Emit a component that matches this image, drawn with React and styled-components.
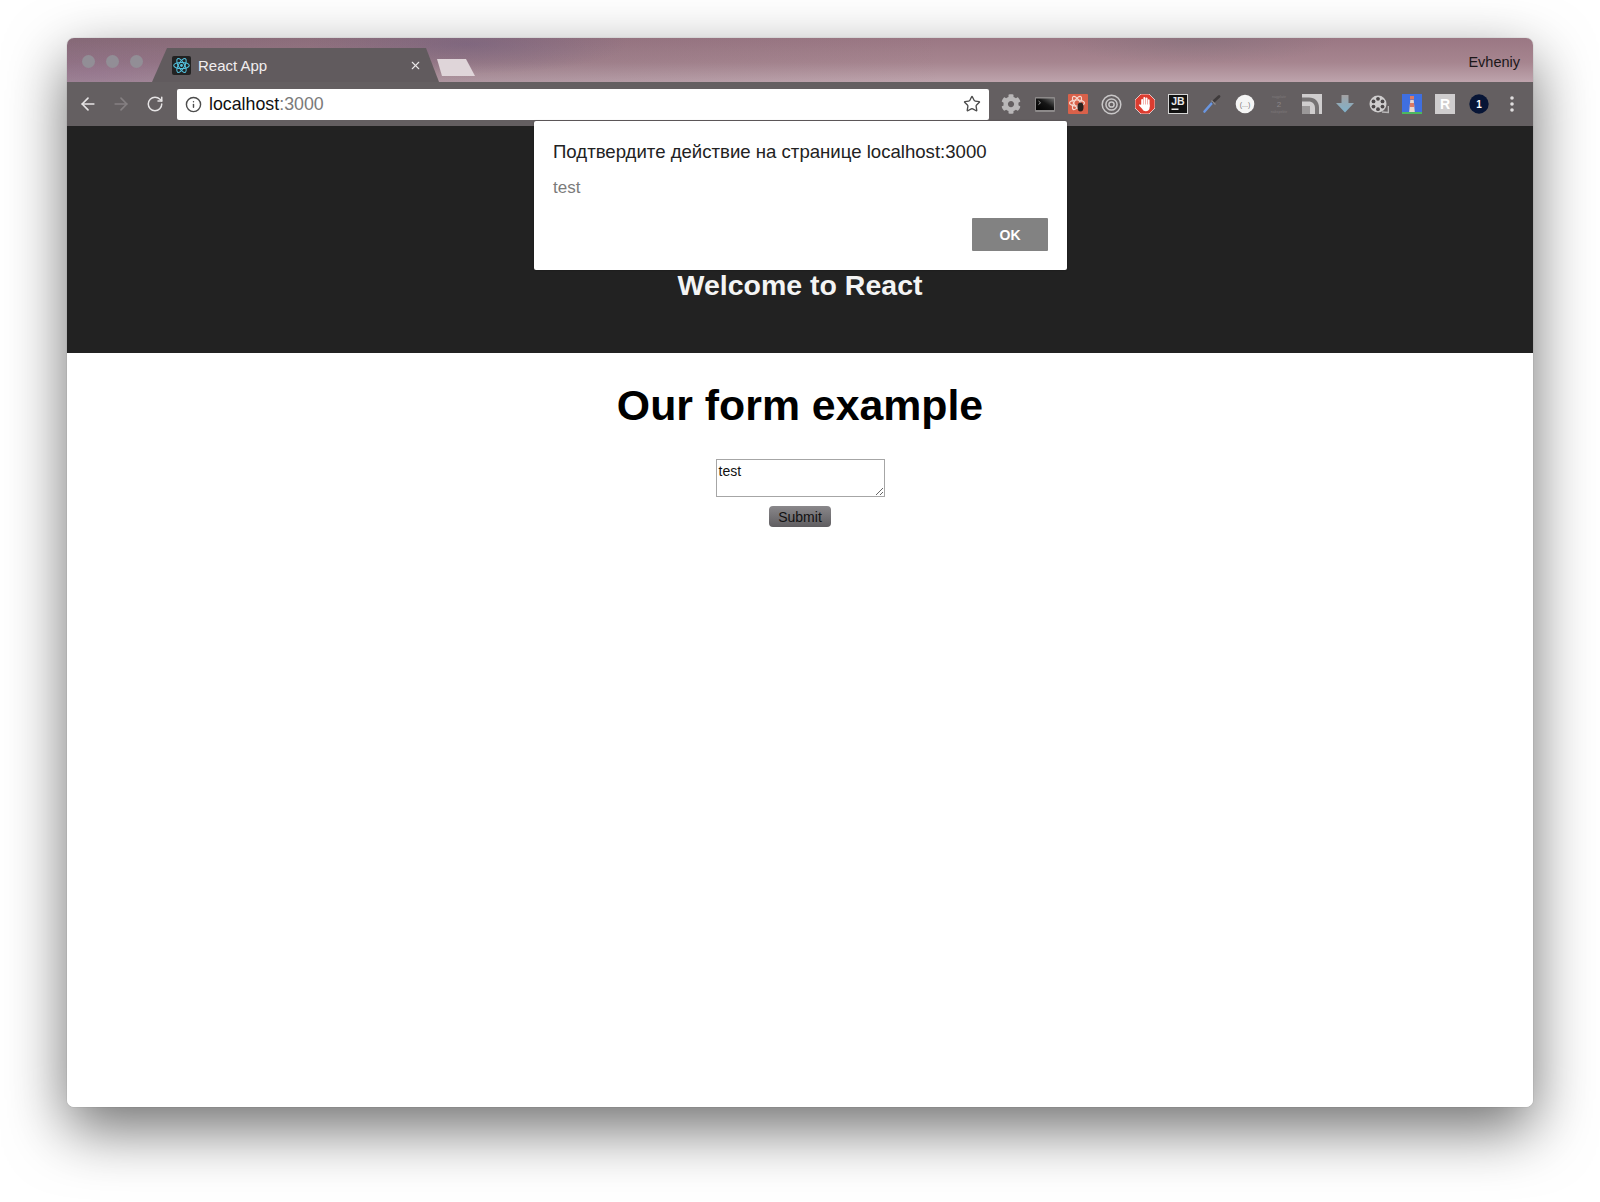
import React from "react";
import styled, { createGlobalStyle } from "styled-components";
import { ArrowLeft, ArrowRight, Info, RotateCw, Star, X } from "lucide-react";
import { FaCog } from "react-icons/fa";

const GlobalStyle = createGlobalStyle`
  html, body {
    margin: 0;
    padding: 0;
    background: #ffffff;
    font-family: "Liberation Sans", Arial, sans-serif;
  }
`;

const Desktop = styled.div`
  width: 1600px;
  height: 1202px;
  padding: 38px 67px 95px;
  box-sizing: border-box;
  overflow: hidden;
`;

const Window = styled.div`
  position: relative;
  display: flex;
  flex-direction: column;
  height: 100%;
  border-radius: 7px;
  background: #ffffff;
  box-shadow: 0 22px 60px rgba(0, 0, 0, 0.57), 0 0 1px rgba(0, 0, 0, 0.45);
`;

const TabStrip = styled.div`
  display: flex;
  align-items: flex-end;
  height: 44px;
  flex: none;
  border-radius: 7px 7px 0 0;
  background:
    radial-gradient(ellipse 160px 30px at 400px 6px, rgba(105, 90, 125, 0.45), rgba(105, 90, 125, 0) 100%),
    radial-gradient(ellipse 150px 34px at 30px 36px, rgba(150, 110, 150, 0.35), rgba(150, 110, 150, 0) 100%),
    radial-gradient(ellipse 140px 24px at 1130px 2px, rgba(110, 105, 115, 0.3), rgba(110, 105, 115, 0) 100%),
    linear-gradient(90deg, rgba(85, 70, 90, 0.3) 0%, rgba(85, 70, 90, 0.1) 35%, rgba(0, 0, 0, 0) 60%),
    linear-gradient(180deg, #9a7783 0%, #a6858f 55%, #bea4ad 100%);
`;

const Lights = styled.div`
  display: flex;
  align-self: flex-start;
  gap: 11px;
  margin: 17px 0 0 15px;
`;

const Light = styled.span`
  width: 13px;
  height: 13px;
  border-radius: 50%;
  background: #928e96;
`;

const Tab = styled.div`
  display: flex;
  align-items: center;
  width: 287px;
  height: 34px;
  margin-left: 9px;
  padding: 0 17px 0 20px;
  box-sizing: border-box;
  background: #615b5e;
  color: #f1eeef;
  font-size: 15px;
  clip-path: polygon(0 100%, 15px 0, 274px 0, 100% 100%);
`;

const Favicon = styled.span`
  display: flex;
  align-items: center;
  justify-content: center;
  width: 19px;
  height: 19px;
  margin-right: 7px;
  border-radius: 2px;
  background: #222222;
`;

const TabTitle = styled.span`
  flex: 1;
`;

const NewTab = styled.div`
  width: 38px;
  height: 17px;
  margin: 0 0 6px -2px;
  background: #dfd5d9;
  clip-path: polygon(0 0, 29px 0, 100% 100%, 5px 100%);
`;

const UserName = styled.div`
  align-self: center;
  margin-left: auto;
  padding: 3px 13px 0 0;
  color: #1b1719;
  font-size: 14.5px;
`;

const Toolbar = styled.div`
  display: flex;
  align-items: center;
  flex: none;
  height: 44px;
  padding-left: 4px;
  background: #645f61;
`;

const NavButton = styled.span`
  display: flex;
  align-items: center;
  justify-content: center;
  width: 33.5px;
  color: ${(props) => (props.$disabled ? "#858082" : "#e6e4e5")};
`;

const Omnibox = styled.div`
  display: flex;
  align-items: center;
  width: 812px;
  height: 31px;
  margin: 0 5.7px 0 5.5px;
  padding: 0 8px;
  box-sizing: border-box;
  border-radius: 2px;
  background: #ffffff;
  color: #4c4c4c;
`;

const Url = styled.span`
  flex: 1;
  margin-left: 7px;
  color: #111111;
  font-size: 17.8px;
`;

const Port = styled.span`
  color: #7a7a7a;
`;

const Extensions = styled.div`
  display: flex;
  align-items: center;
`;

const Extension = styled.span`
  display: flex;
  align-items: center;
  justify-content: center;
  width: 33.4px;
  height: 22px;
`;

const Content = styled.div`
  display: flex;
  flex: 1;
  flex-direction: column;
  border-radius: 0 0 7px 7px;
  overflow: hidden;
  background: #ffffff;
`;

const Header = styled.header`
  display: flex;
  align-items: flex-end;
  justify-content: center;
  flex: none;
  height: 227px;
  padding-bottom: 51px;
  box-sizing: border-box;
  background: #222222;
`;

const HeaderTitle = styled.h2`
  margin: 0;
  color: #f4f4f4;
  font-size: 28.5px;
  line-height: 34px;
  font-weight: 700;
`;

const Main = styled.main`
  display: flex;
  flex-direction: column;
  align-items: center;
`;

const PageTitle = styled.h1`
  margin: 27px 0 29px;
  color: #000000;
  font-size: 42.8px;
  line-height: 50px;
  font-weight: 700;
`;

const Form = styled.form`
  display: flex;
  flex-direction: column;
  align-items: center;
  gap: 9px;
`;

const TextArea = styled.textarea`
  display: block;
  width: 169px;
  height: 38px;
  margin: 0;
  padding: 3px 2px;
  box-sizing: border-box;
  border: 1px solid #a6a6a6;
  border-radius: 0;
  outline: none;
  font-family: "Liberation Sans", Arial, sans-serif;
  font-size: 14px;
  line-height: 17px;
  color: #111111;
`;

const SubmitButton = styled.button`
  width: 62px;
  height: 21px;
  padding: 0;
  border: none;
  border-radius: 4px;
  background: linear-gradient(180deg, #8a888b 0%, #5f5d60 100%);
  color: #111111;
  font-family: "Liberation Sans", Arial, sans-serif;
  font-size: 14px;
`;

const Dialog = styled.div`
  position: absolute;
  top: 83px;
  left: 467px;
  width: 533px;
  height: 149px;
  padding: 20px 19px 19px 19px;
  box-sizing: border-box;
  display: flex;
  flex-direction: column;
  border-radius: 2px;
  background: #ffffff;
  box-shadow: 0 0 2px rgba(0, 0, 0, 0.35);
`;

const DialogTitle = styled.div`
  color: #222222;
  font-size: 18.6px;
  line-height: 22px;
`;

const DialogMessage = styled.div`
  margin-top: 15px;
  color: #7b7b7b;
  font-size: 17px;
  line-height: 20px;
`;

const OkButton = styled.button`
  align-self: flex-end;
  width: 76px;
  height: 33px;
  margin-top: auto;
  border: none;
  border-radius: 1px;
  background: #828282;
  color: #ffffff;
  font-family: "Liberation Sans", Arial, sans-serif;
  font-size: 14px;
  font-weight: 700;
`;

const ReactLogo = ({ size = 17, color = "#53c1de" }) => (
  <svg width={size} height={size} viewBox="0 0 24 24" fill="none" stroke={color} strokeWidth="1.5">
    <ellipse cx="12" cy="12" rx="11" ry="4.3" />
    <ellipse cx="12" cy="12" rx="11" ry="4.3" transform="rotate(60 12 12)" />
    <ellipse cx="12" cy="12" rx="11" ry="4.3" transform="rotate(120 12 12)" />
    <circle cx="12" cy="12" r="2" fill={color} stroke="none" />
  </svg>
);

const TerminalIcon = () => (
  <svg width="20" height="15" viewBox="0 0 20 15">
    <defs>
      <linearGradient id="term-fill" x1="0" y1="1" x2="1" y2="0">
        <stop offset="0" stopColor="#000000" />
        <stop offset="0.55" stopColor="#151515" />
        <stop offset="1" stopColor="#6a6a6a" />
      </linearGradient>
    </defs>
    <rect width="20" height="15" rx="1" fill="#8d8a8a" />
    <rect x="1" y="1.5" width="18" height="11.5" fill="url(#term-fill)" />
    <path d="M3.5 4l2 1.8-2 1.8" fill="none" stroke="#a8a8a8" strokeWidth="0.9" />
  </svg>
);

const AtomBugIcon = () => (
  <svg width="20" height="20" viewBox="0 0 20 20">
    <rect width="20" height="20" rx="1" fill="#d9614a" />
    <g fill="none" stroke="#f6d8cf" strokeWidth="1.2">
      <ellipse cx="9" cy="9" rx="7.5" ry="3" />
      <ellipse cx="9" cy="9" rx="7.5" ry="3" transform="rotate(60 9 9)" />
      <ellipse cx="9" cy="9" rx="7.5" ry="3" transform="rotate(120 9 9)" />
    </g>
    <ellipse cx="12.5" cy="13" rx="3" ry="4.5" fill="#2a211e" />
  </svg>
);

const TargetIcon = () => (
  <svg width="21" height="21" viewBox="0 0 21 21" fill="none" stroke="#c9c7c8">
    <circle cx="10.5" cy="10.5" r="9.3" strokeWidth="1.5" />
    <circle cx="10.5" cy="10.5" r="5.6" strokeWidth="1.5" />
    <circle cx="10.5" cy="10.5" r="2.6" strokeWidth="1.5" />
  </svg>
);

const StopHandIcon = () => (
  <svg width="20" height="20" viewBox="0 0 20 20">
    <polygon points="6,0 14,0 20,6 20,14 14,20 6,20 0,14 0,6" fill="#dc3c30" stroke="#f0e6e6" strokeWidth="0.8" />
    <g fill="#ffffff">
      <rect x="6.2" y="5" width="1.9" height="8" rx="0.9" />
      <rect x="8.4" y="3" width="1.9" height="9" rx="0.9" />
      <rect x="10.6" y="3.6" width="1.9" height="9" rx="0.9" />
      <rect x="12.8" y="5.2" width="1.8" height="8" rx="0.9" />
      <path d="M6.2 10.5h8.4v3.2c0 2.2-1.6 3.6-3.8 3.6-1.7 0-2.7-.8-3.5-2.2L4 11.6c-.5-.9.6-1.6 1.3-.9z" />
    </g>
  </svg>
);

const JetBrainsIcon = () => (
  <svg width="20" height="20" viewBox="0 0 20 20">
    <rect x="0.5" y="0.5" width="19" height="19" fill="#111111" stroke="#d5d5d5" />
    <text x="10" y="11" textAnchor="middle" fill="#e8e8e8" fontSize="10.5" fontWeight="700" fontFamily="Liberation Sans">JB</text>
    <rect x="3.5" y="14.5" width="7" height="1.5" fill="#e8e8e8" />
  </svg>
);

const PipetteIcon = () => (
  <svg width="20" height="20" viewBox="0 0 20 20">
    <path d="M2.5 17.5L10 9" stroke="#6a96e0" strokeWidth="2.6" strokeLinecap="round" />
    <path d="M11 8L17 2.5" stroke="#3e3a3b" strokeWidth="2.8" strokeLinecap="round" />
    <path d="M9.5 6.5l4 4" stroke="#8f8b8c" strokeWidth="1.2" />
  </svg>
);

const BubbleIcon = () => (
  <svg width="20" height="20" viewBox="0 0 20 20">
    <circle cx="10" cy="10" r="9.3" fill="#f5f5f5" />
    <text x="10" y="12.5" textAnchor="middle" fill="#777777" fontSize="7" fontFamily="Liberation Sans">(...)</text>
  </svg>
);

const CounterIcon = () => (
  <svg width="22" height="20" viewBox="0 0 22 20">
    <text x="11" y="3.5" textAnchor="middle" fill="#7f7a7c" fontSize="3.6" fontFamily="Liberation Sans">nagplatir</text>
    <text x="11" y="13" textAnchor="middle" fill="#8b8688" fontSize="8" fontFamily="Liberation Sans">2</text>
    <text x="11" y="18.5" textAnchor="middle" fill="#7f7a7c" fontSize="3.6" fontFamily="Liberation Sans">nakspektir</text>
  </svg>
);

const CastIcon = () => (
  <svg width="20" height="20" viewBox="0 0 20 20">
    <rect width="20" height="20" fill="#cfcdce" />
    <path d="M0 3.5h7c6 0 10 4 10 10V20h-4v-6c0-4-2.5-6.5-6.5-6.5H0z" fill="#767374" />
    <rect y="12" width="8" height="8" fill="#9b9899" />
  </svg>
);

const DownloadIcon = () => (
  <svg width="18" height="20" viewBox="0 0 18 20">
    <defs>
      <linearGradient id="down-fill" x1="0" y1="0" x2="0" y2="1">
        <stop offset="0" stopColor="#a3a1a2" />
        <stop offset="1" stopColor="#7fb2cc" />
      </linearGradient>
    </defs>
    <path d="M5.5 1h7v8H18L9 18.5 0 9h5.5z" fill="url(#down-fill)" />
  </svg>
);

const FilmIcon = () => (
  <svg width="20" height="20" viewBox="0 0 20 20">
    <circle cx="9" cy="10" r="8.5" fill="#cfcdce" />
    <g fill="#4a4648">
      <circle cx="9" cy="4.8" r="1.9" />
      <circle cx="9" cy="15.2" r="1.9" />
      <circle cx="4.5" cy="7.4" r="1.9" />
      <circle cx="13.5" cy="7.4" r="1.9" />
      <circle cx="4.5" cy="12.6" r="1.9" />
      <circle cx="13.5" cy="12.6" r="1.9" />
    </g>
    <path d="M13 18l6.5.5V12" fill="none" stroke="#b9b7b8" strokeWidth="1.6" />
  </svg>
);

const LighthouseIcon = () => (
  <svg width="20" height="20" viewBox="0 0 20 20">
    <rect width="20" height="20" fill="#3f6fe0" />
    <rect y="18" width="20" height="2" fill="#4cb860" />
    <polygon points="8.3,6 11.7,6 12.8,18 7.2,18" fill="#e9d8cf" />
    <polygon points="8,9 12,9 12.3,13 7.7,13" fill="#dc7a64" />
    <rect x="8" y="2" width="4" height="3.5" fill="#dc7a64" />
  </svg>
);

const LetterIcon = () => (
  <svg width="20" height="20" viewBox="0 0 20 20">
    <rect width="20" height="20" fill="#cfcdce" />
    <text x="10" y="15" textAnchor="middle" fill="#ffffff" fontSize="14" fontWeight="700" fontFamily="Liberation Sans">R</text>
  </svg>
);

const OnePasswordIcon = () => (
  <svg width="20" height="20" viewBox="0 0 20 20">
    <circle cx="10" cy="10" r="9.7" fill="#071536" />
    <text x="10" y="13.5" textAnchor="middle" fill="#ffffff" fontSize="10" fontWeight="700" fontFamily="Liberation Sans">1</text>
  </svg>
);

const MenuIcon = () => (
  <svg width="6" height="18" viewBox="0 0 6 18" fill="#e0dedf">
    <circle cx="3" cy="3" r="1.8" />
    <circle cx="3" cy="9" r="1.8" />
    <circle cx="3" cy="15" r="1.8" />
  </svg>
);

const extensions = [
  <FaCog key="gear" size={20} color="#b9b7b8" />,
  <TerminalIcon key="terminal" />,
  <AtomBugIcon key="atom" />,
  <TargetIcon key="target" />,
  <StopHandIcon key="stop" />,
  <JetBrainsIcon key="jb" />,
  <PipetteIcon key="pipette" />,
  <BubbleIcon key="bubble" />,
  <CounterIcon key="counter" />,
  <CastIcon key="cast" />,
  <DownloadIcon key="download" />,
  <FilmIcon key="film" />,
  <LighthouseIcon key="lighthouse" />,
  <LetterIcon key="letter" />,
  <OnePasswordIcon key="one" />,
  <MenuIcon key="menu" />
];

function App() {
  return (
    <>
      <GlobalStyle />
      <Desktop>
        <Window>
          <TabStrip>
            <Lights>
              <Light />
              <Light />
              <Light />
            </Lights>
            <Tab>
              <Favicon>
                <ReactLogo />
              </Favicon>
              <TabTitle>React App</TabTitle>
              <X size={13} color="#e8e6e7" strokeWidth={2} />
            </Tab>
            <NewTab />
            <UserName>Evheniy</UserName>
          </TabStrip>
          <Toolbar>
            <NavButton>
              <ArrowLeft size={20} strokeWidth={2} />
            </NavButton>
            <NavButton $disabled>
              <ArrowRight size={20} strokeWidth={2} />
            </NavButton>
            <NavButton>
              <RotateCw size={18} strokeWidth={2} />
            </NavButton>
            <Omnibox>
              <Info size={17} strokeWidth={2} />
              <Url>
                localhost<Port>:3000</Port>
              </Url>
              <Star size={18} strokeWidth={1.8} />
            </Omnibox>
            <Extensions>
              {extensions.map((icon) => (
                <Extension key={icon.key}>{icon}</Extension>
              ))}
            </Extensions>
          </Toolbar>
          <Content>
            <Header>
              <HeaderTitle>Welcome to React</HeaderTitle>
            </Header>
            <Main>
              <PageTitle>Our form example</PageTitle>
              <Form>
                <TextArea defaultValue="test" />
                <SubmitButton type="button">Submit</SubmitButton>
              </Form>
            </Main>
          </Content>
          <Dialog>
            <DialogTitle>Подтвердите действие на странице localhost:3000</DialogTitle>
            <DialogMessage>test</DialogMessage>
            <OkButton type="button">OK</OkButton>
          </Dialog>
        </Window>
      </Desktop>
    </>
  );
}

export default App;
